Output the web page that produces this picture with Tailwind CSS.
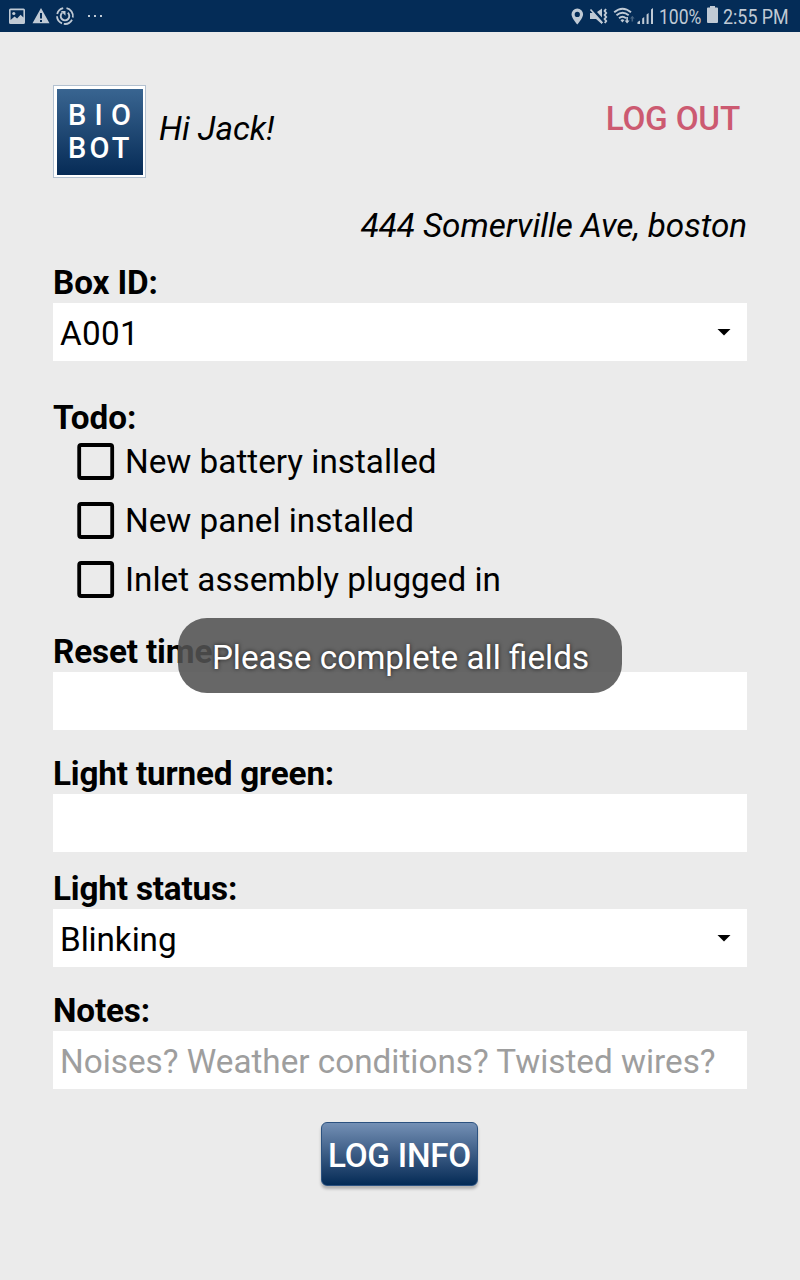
<!DOCTYPE html>
<html lang="en">
<head>
<meta charset="utf-8">
<title>Biobot</title>
<script src="https://cdn.jsdelivr.net/npm/@tailwindcss/browser@4"></script>
</head>
<body class="relative h-[1280px] w-[800px] overflow-hidden bg-[#ebebeb] font-['Roboto',sans-serif] text-[33.28px] leading-[39px] text-black">
<header class="flex h-8 items-center bg-[#042c57] text-[#c0cad5]">
  <svg class="h-8 w-[120px]" viewBox="0 0 120 32" fill="currentColor">
    <path fill-rule="evenodd" d="M10.5 8.500h13a1.500 1.500 0 0 1 1.500 1.500v12.500a1.500 1.500 0 0 1-1.500 1.500h-13A1.500 1.500 0 0 1 9 22.500v-12.500A1.500 1.500 0 0 1 10.500 8.500zM10.600 10.300v9.700l4-3.500 2.500 2 3.500-3.700 2.800 2.700v-7.200z"/>
    <circle cx="13.800" cy="13.500" r="1.600"/>
    <path fill-rule="evenodd" d="M41 8l8.500 15.200h-17zM40 13v5.500h2V13zM40 20v2h2v-2z"/>
    <g fill="none" stroke="currentColor" stroke-width="1.800">
      <path d="M63.200 8.200A8 8 0 0 0 57.200 14M57 16.300A8 8 0 0 0 62 23.400M63.800 23.900A8 8 0 0 0 72 19.800M72.800 17.500A8 8 0 0 0 66.500 8.200"/>
      <path d="M62.200 12.800A4.300 4.300 0 1 0 67.800 12.800" stroke-width="1.900"/>
    </g>
    <path d="M60.800 11h4.700v4.700z"/>
    <path d="M88 15h2v2h-2zM94 15h2v2h-2zM100 15h2v2h-2z"/>
  </svg>
  <div class="flex-1"></div>
  <svg class="h-8 w-[94px]" viewBox="565 0 94 32" fill="currentColor">
    <path fill-rule="evenodd" d="M577.300 8.500a5.800 5.800 0 0 1 5.800 5.800c0 4-5.800 10.200-5.800 10.200s-5.800-6.200-5.800-10.200a5.800 5.800 0 0 1 5.800-5.800zm0 3.300a2.600 2.600 0 1 0 0 5.200 2.600 2.600 0 0 0 0-5.200z"/>
    <path d="M590 13h4l8 8v3.200l-6-5.200h-6zM597 12l5-3.500v9z"/>
    <path d="M592 9l11.500 13.500" stroke="#042c57" stroke-width="1.600"/>
    <path d="M590.500 9.500l12 13.500" stroke="currentColor" stroke-width="1.700"/>
    <path d="M605.500 9l-1.400 2 1.600 2-1.600 2 1.600 2-1.600 2 1.600 2-1.400 2" transform="translate(.5 0)" fill="none" stroke="currentColor" stroke-width="1.900"/>
    <g fill="none" stroke="currentColor" stroke-width="1.900">
      <path d="M614.200 12.300Q622.500 5 631 12.300M616.500 15.300Q622.500 10.200 628.700 15.300M619 18.200Q622.500 15.300 626 18.200"/>
    </g>
    <path d="M620.500 20.200q2-1.800 3.800 0l-1.900 2.300z"/>
    <path d="M626.300 17h1.600v3.500h1.700l-2.500 3-2.500-3h1.700z"/>
    <path d="M631.500 21.500v-3h-1.500l2.300-2.800 2.300 2.800h-1.500v3z" opacity=".35"/>
    <path d="M637.500 24v-2l2.500-1.500V24zM642.200 18.500l2-1.500v7h-2zM646.600 14.500l2-1.500v11h-2zM651 9.500l2-1.500v16h-2z"/>
  </svg>
  <span class="w-[46px] origin-left scale-x-[0.835] whitespace-nowrap pt-[2px] text-[21px] leading-8">100%</span>
  <svg class="h-8 w-[16px]" viewBox="705 0 16 32" fill="currentColor"><path d="M707 8.500a1 1 0 0 1 1-1h2V6h5v1.500h2a1 1 0 0 1 1 1V22a1 1 0 0 1-1 1h-9a1 1 0 0 1-1-1z"/></svg>
  <span class="ml-[2px] w-[77px] origin-left scale-x-[0.85] whitespace-nowrap pt-[2px] text-[21px] leading-8">2:55 PM</span>
</header>

<main class="px-[53px] pt-[53px]">
  <div class="flex h-[93px]">
    <div class="h-[93px] w-[93px] border border-[#b3c1d0] bg-white p-[2.5px]">
      <svg class="h-full w-full" viewBox="0 0 86 86">
        <defs><linearGradient id="logo" x1="0" y1="0" x2="0" y2="1"><stop offset="0" stop-color="#396591"/><stop offset="1" stop-color="#062b56"/></linearGradient></defs>
        <rect width="86" height="86" fill="url(#logo)"/>
        <g fill="#fff" font-family="Roboto" font-weight="500" font-size="29">
          <text x="11" y="36" textLength="63">B I O</text>
          <text x="11" y="69.300" textLength="61.500">BOT</text>
        </g>
      </svg>
    </div>
    <span class="ml-[13px] mt-6 tracking-[-0.1px] italic">Hi Jack!</span>
    <button class="ml-auto mr-[7px] mt-[14px] h-[39px] tracking-[-0.2px] font-medium text-[#cc5a71]">LOG OUT</button>
  </div>
  <p class="mt-7 text-right tracking-[-0.07px] italic">444 Somerville Ave, boston</p>

  <label class="mt-[18px] block h-[40px] tracking-[-0.1px] font-bold">Box ID:</label>
  <div class="flex h-[58px] items-center justify-between bg-white pl-[7px] pr-4 pt-[2px]">
    <span class="tracking-[0.3px]">A001</span>
    <svg class="mb-[2px] h-[7px] w-[14px]" viewBox="0 0 14 7"><path d="M.5 0h13L7 6.500z"/></svg>
  </div>

  <div class="mt-[37px] h-[34px] tracking-[-0.05px] font-bold">Todo:</div>
  <div class="flex h-[59px] items-center pl-6"><svg class="h-[38px] w-[38px]" viewBox="0 0 38 38"><rect x="2.200" y="2" width="33" height="33" rx="2" fill="none" stroke="#000" stroke-width="3.800"/></svg><span class="ml-[10px]">New battery installed</span></div>
  <div class="flex h-[59px] items-center pl-6"><svg class="h-[38px] w-[38px]" viewBox="0 0 38 38"><rect x="2.200" y="2" width="33" height="33" rx="2" fill="none" stroke="#000" stroke-width="3.800"/></svg><span class="ml-[10px]">New panel installed</span></div>
  <div class="flex h-[59px] items-center pl-6"><svg class="h-[38px] w-[38px]" viewBox="0 0 38 38"><rect x="2.200" y="2" width="33" height="33" rx="2" fill="none" stroke="#000" stroke-width="3.800"/></svg><span class="ml-[10px]">Inlet assembly plugged in</span></div>

  <label class="mt-[23px] block h-[40px] tracking-[-0.15px] font-bold">Reset time:</label>
  <div class="h-[58px] bg-white"></div>
  <label class="mt-6 block h-10 tracking-[-0.18px] font-bold">Light turned green:</label>
  <div class="h-[58px] bg-white"></div>
  <label class="mt-[17px] block h-10 tracking-[-0.18px] font-bold">Light status:</label>
  <div class="flex h-[58px] items-center justify-between bg-white pl-[7px] pr-4 pt-[2px]">
    <span class="tracking-[-0.1px]">Blinking</span>
    <svg class="mb-[2px] h-[7px] w-[14px]" viewBox="0 0 14 7"><path d="M.5 0h13L7 6.500z"/></svg>
  </div>
  <label class="mt-6 block h-10 tracking-[-0.15px] font-bold">Notes:</label>
  <div class="flex h-[58px] items-center bg-white pl-[7px] pt-[2px] text-[#9e9e9e]">Noises? Weather conditions? Twisted wires?</div>

  <button class="ml-[268px] mt-[33px] flex h-16 w-[157px] items-center justify-center whitespace-nowrap rounded-md border border-[#2c5280] bg-linear-to-b from-[#7490b5] to-[#032b56] pt-[2px] tracking-[-0.25px] font-medium text-white shadow-[0_3px_3px_rgba(0,0,0,0.25)]">LOG INFO</button>
</main>

<div class="absolute left-[178px] top-[618px] flex h-[75px] w-[444px] items-center justify-center rounded-[29px] bg-[#525252]/88 pl-px pt-1 text-white [text-shadow:0_0_4px_rgba(0,0,0,0.7)]">Please complete all fields</div>
</body>
</html>
